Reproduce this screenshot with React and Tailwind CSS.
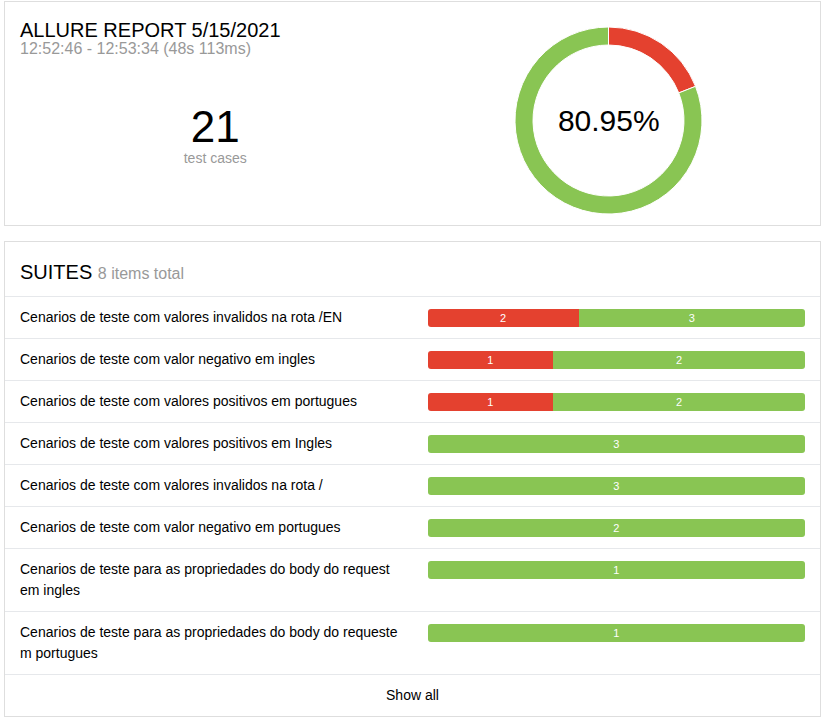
import React from 'react'

const RED = '#e4412f'
const GREEN = '#89c553'

const suites = [
  { name: 'Cenarios de teste com valores invalidos na rota /EN', failed: 2, passed: 3 },
  { name: 'Cenarios de teste com valor negativo em ingles', failed: 1, passed: 2 },
  { name: 'Cenarios de teste com valores positivos em portugues', failed: 1, passed: 2 },
  { name: 'Cenarios de teste com valores positivos em Ingles', failed: 0, passed: 3 },
  { name: 'Cenarios de teste com valores invalidos na rota /', failed: 0, passed: 3 },
  { name: 'Cenarios de teste com valor negativo em portugues', failed: 0, passed: 2 },
  { name: 'Cenarios de teste para as propriedades do body do request em ingles', failed: 0, passed: 1 },
  { name: 'Cenarios de teste para as propriedades do body do requeste m portugues', failed: 0, passed: 1 },
]

function Donut() {
  // 4 failed of 21 -> red arc from 12 o'clock, green for the rest
  return (
    <div className="relative w-[187px] h-[187px]">
      <svg width="187" height="187" viewBox="0 0 187 187">
        <path
          d="M 93.5 0 A 93.5 93.5 0 0 1 180.54 59.34 L 163.78 65.92 A 75.5 75.5 0 0 0 93.5 18 Z"
          fill={RED}
          stroke="#fff"
          strokeWidth="1"
        />
        <path
          d="M 180.54 59.34 A 93.5 93.5 0 1 1 93.5 0 L 93.5 18 A 75.5 75.5 0 1 0 163.78 65.92 Z"
          fill={GREEN}
          stroke="#fff"
          strokeWidth="1"
        />
      </svg>
      <div className="absolute inset-0 flex items-center justify-center text-[30px] leading-none text-black">
        80.95%
      </div>
    </div>
  )
}

function Bar({ failed, passed }) {
  const total = failed + passed
  return (
    <div className="flex h-[18px] mt-[2px] rounded-[3px] overflow-hidden text-white text-[11px] leading-[18px]">
      {failed > 0 && (
        <div className="text-center" style={{ width: `${(failed / total) * 100}%`, backgroundColor: RED }}>
          {failed}
        </div>
      )}
      {passed > 0 && (
        <div className="text-center" style={{ width: `${(passed / total) * 100}%`, backgroundColor: GREEN }}>
          {passed}
        </div>
      )}
    </div>
  )
}

export default function App() {
  return (
    <div className="bg-white min-h-[719px] pt-[1px] pl-[4px]" style={{ fontFamily: '"Liberation Sans", Arial, sans-serif' }}>
      {/* Summary widget */}
      <div className="w-[817px] h-[225px] border border-[#dedede] flex">
        <div className="w-1/2 pt-[18px] px-[15px]">
          <div className="text-[20px] leading-[20px] text-black">ALLURE REPORT 5/15/2021</div>
          <div className="text-[16px] leading-[18px] text-[#999]">12:52:46 - 12:53:34 (48s 113ms)</div>
          <div className="mt-[47px] pl-[13px] text-center">
            <div className="text-[44px] leading-[44px] text-black">21</div>
            <div className="mt-[1px] text-[14px] leading-[16px] text-[#999]">test cases</div>
          </div>
        </div>
        <div className="w-1/2 pt-[25px] pr-[15px] flex justify-center items-start">
          <Donut />
        </div>
      </div>

      {/* Suites widget */}
      <div className="mt-[15px] w-[817px] border border-[#dedede]">
        <div className="h-[55px] pt-[20px] px-[15px] text-[20px] leading-[20px] border-b border-[#e6e8eb]">
          <span className="text-black">SUITES</span>{' '}
          <span className="text-[16px] leading-[16px] text-[#999]">8 items total</span>
        </div>
        {suites.map(s => (
          <div key={s.name} className="flex border-b border-[#e6e8eb]">
            <div className="w-1/2 px-[15px] py-[10px] text-[14px] leading-[21px] text-black">{s.name}</div>
            <div className="w-1/2 px-[15px] py-[10px]">
              <Bar failed={s.failed} passed={s.passed} />
            </div>
          </div>
        ))}
        <div className="py-[10px] text-center text-[14px] leading-[21px] text-black">Show all</div>
      </div>
    </div>
  )
}
